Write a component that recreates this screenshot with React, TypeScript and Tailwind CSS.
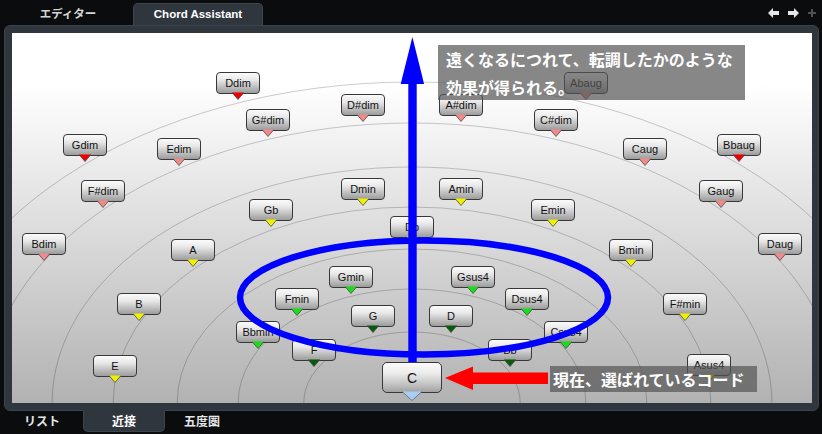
import React from "react";

type Tri = "red" | "pink" | "yellow" | "green" | "dgreen";

const TRI: Record<Tri, string> = {
  red: "#ee0000",
  pink: "#f28a8a",
  yellow: "#f0f000",
  green: "#19dd19",
  dgreen: "#0b5a0b",
};

// [label, offset of centre from x=412 (page), top y (page), triangle colour]
const NODES: Array<[string, number, number, Tri]> = [
  ["Ddim", -174, 72, "red"],
  ["Abaug", 174, 72, "pink"],
  ["D#dim", -49, 94, "pink"],
  ["A#dim", 49, 94, "pink"],
  ["G#dim", -144, 109, "pink"],
  ["C#dim", 144, 109, "pink"],
  ["Gdim", -327, 134, "red"],
  ["Bbaug", 327, 134, "red"],
  ["Edim", -233, 138, "pink"],
  ["Caug", 233, 138, "pink"],
  ["Dmin", -49, 178, "yellow"],
  ["Amin", 49, 178, "yellow"],
  ["F#dim", -309, 180, "pink"],
  ["Gaug", 309, 180, "pink"],
  ["Gb", -141, 199, "yellow"],
  ["Emin", 141, 199, "yellow"],
  ["Db", 0, 216, "yellow"],
  ["Bdim", -368, 233, "pink"],
  ["Daug", 368, 233, "pink"],
  ["A", -219, 239, "yellow"],
  ["Bmin", 219, 239, "yellow"],
  ["Gmin", -61, 266, "green"],
  ["Gsus4", 61, 266, "green"],
  ["Fmin", -115, 288, "green"],
  ["Dsus4", 115, 288, "green"],
  ["B", -273, 293, "yellow"],
  ["F#min", 273, 293, "yellow"],
  ["G", -39, 305, "dgreen"],
  ["D", 39, 305, "dgreen"],
  ["Bbmin", -154, 321, "green"],
  ["Csus4", 154, 321, "green"],
  ["F", -98, 339, "dgreen"],
  ["Bb", 98, 339, "dgreen"],
  ["E", -297, 355, "yellow"],
  ["Asus4", 297, 354, "yellow"],
];

const ARCS = [71, 114, 154, 196, 236, 280, 321];

function ChordNode({ label, off, top, tri }: { label: string; off: number; top: number; tri: Tri }) {
  return (
    <div className="absolute" style={{ left: 378 + off, top: top - 33 }}>
      <div className="relative w-[44px] h-[22px] rounded-[4px] border border-[#383838] bg-[linear-gradient(to_bottom,#fbfbfb_0%,#e8e8e8_35%,#bcbcbc_72%,#9c9c9c_100%)] flex items-center justify-center text-[11px] leading-none text-[#111] [font-family:'Liberation_Sans',Arial,sans-serif]">
        {label}
      </div>
      <svg className="absolute left-[16px] top-[20px]" width="12" height="8" viewBox="0 0 12 8">
        <polygon points="0,0.5 12,0.5 6,7.5" fill={TRI[tri]} />
        <polyline points="0,0.5 6,7.5 12,0.5" fill="none" stroke="#4a4a4a" strokeWidth="0.8" />
      </svg>
    </div>
  );
}

export default function App() {
  return (
    <div className="w-[822px] h-[434px] bg-[#0b0c0e] flex flex-col overflow-hidden select-none">
      {/* top tab bar */}
      <div className="h-[25px] flex items-end relative shrink-0">
        <div className="ml-[3px] w-[130px] h-[22px] flex items-center justify-center text-[11.5px] font-bold text-[#d4d6d8] [font-family:'Noto_Sans_CJK_JP',sans-serif]">
          エディター
        </div>
        <div className="w-[130px] h-[22px] rounded-t-[5px] bg-[#2f363e] border-t border-x border-[#3d454e] flex items-center justify-center text-[11.5px] font-bold text-white [font-family:'Liberation_Sans',Arial,sans-serif]">
          Chord Assistant
        </div>
        <div className="absolute right-[6px] top-[8px] flex items-center gap-[9px]">
          <svg width="11" height="10" viewBox="0 0 11 10">
            <polygon points="0,5 5,0 5,3 11,3 11,7 5,7 5,10" fill="#e6e6e6" />
          </svg>
          <svg width="11" height="10" viewBox="0 0 11 10">
            <polygon points="11,5 6,0 6,3 0,3 0,7 6,7 6,10" fill="#e6e6e6" />
          </svg>
          <svg width="8" height="8" viewBox="0 0 8 8">
            <rect x="3" y="0" width="2" height="8" fill="#4f5358" />
            <rect x="0" y="3" width="8" height="2" fill="#4f5358" />
          </svg>
        </div>
      </div>

      {/* main panel */}
      <div className="ml-[4px] w-[815px] h-[386px] shrink-0 rounded-[6px] bg-[#2f363e] border border-[#3b434c] pl-[7px] pr-[6px] pt-[7px] pb-[7px]">
        <div className="relative w-[800px] h-[370px] overflow-hidden bg-[linear-gradient(to_bottom,#ffffff_0%,#ffffff_14%,#b2b2b2_100%)]">
          <svg className="absolute inset-0" width="800" height="370">
            {ARCS.map((b) => (
              <ellipse key={b} cx="400" cy="370" rx={b * 1.525} ry={b} fill="none" stroke="rgba(0,0,0,0.2)" strokeWidth="1" />
            ))}
          </svg>

          {NODES.map(([l, o, t, c]) => (
            <ChordNode key={l} label={l} off={o} top={t} tri={c} />
          ))}

          {/* current chord C */}
          <div className="absolute left-[370px] top-[329px]">
            <div className="w-[60px] h-[31px] rounded-[5px] border border-[#383838] bg-[linear-gradient(to_bottom,#fbfbfb_0%,#ececec_35%,#c4c4c4_72%,#a2a2a2_100%)] flex items-center justify-center text-[14px] leading-none text-[#111] [font-family:'Liberation_Sans',Arial,sans-serif]">
              C
            </div>
            <svg className="absolute left-[20px] top-[29px]" width="20" height="10" viewBox="0 0 20 10">
              <polygon points="0,0.5 20,0.5 10,9.5" fill="#a9cdf3" />
              <polyline points="0,0.5 10,9.5 20,0.5" fill="none" stroke="#5a6a7a" strokeWidth="0.8" />
            </svg>
          </div>

          {/* overlays: blue ellipse, arrows */}
          <svg className="absolute inset-0 pointer-events-none" width="800" height="370">
            <ellipse cx="412" cy="264.5" rx="184" ry="57" fill="none" stroke="#0000ff" strokeWidth="6.5" />
            <rect x="396.3" y="49" width="8.4" height="280" fill="#0000ff" />
            <polygon points="400.4,4 388.7,51 412.1,51" fill="#0000ff" />
            <polygon points="433,345 461,333.5 461,357" fill="#ff0000" />
            <rect x="460" y="339.5" width="76" height="11.5" fill="#ff0000" />
          </svg>

          <div className="absolute left-[426px] top-[12px] w-[307px] h-[55px] bg-[rgba(84,84,84,0.7)] pl-[8px] text-white text-[16px] leading-[28px] font-bold whitespace-nowrap [font-family:'Noto_Sans_CJK_JP',sans-serif]">
            <div>遠くなるにつれて、転調したかのような</div>
            <div>効果が得られる。</div>
          </div>

          <div className="absolute left-[538px] top-[333px] w-[207px] h-[26px] bg-[rgba(84,84,84,0.7)] pl-[3px] flex items-center text-white text-[16px] leading-none font-bold whitespace-nowrap [font-family:'Noto_Sans_CJK_JP',sans-serif]">
            現在、選ばれているコード
          </div>
        </div>
      </div>

      {/* bottom tab bar */}
      <div className="flex items-start -mt-[1px] text-[12px] font-bold text-[#e4e6e8] [font-family:'Noto_Sans_CJK_JP',sans-serif]">
        <div className="ml-[1px] w-[82px] h-[21px] flex items-center justify-center">リスト</div>
        <div className="w-[82px] h-[22px] rounded-b-[5px] bg-[#2f363e] border-b border-x border-[#3d454e] flex items-center justify-center text-white">
          近接
        </div>
        <div className="w-[74px] h-[21px] flex items-center justify-center">五度圏</div>
      </div>
    </div>
  );
}
